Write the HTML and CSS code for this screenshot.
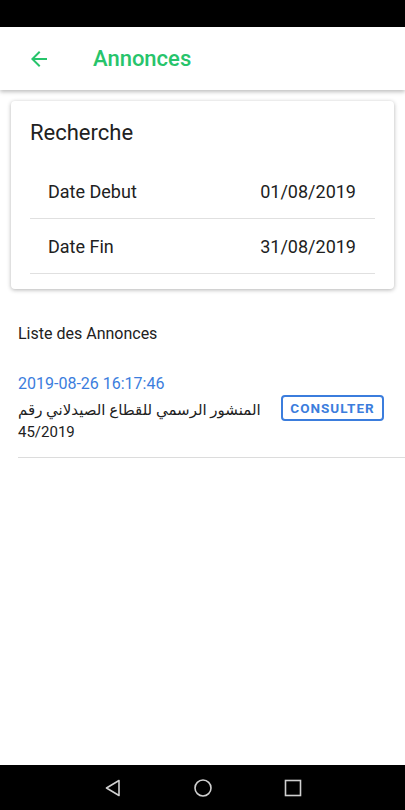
FILE: index.html
```html
<!DOCTYPE html>
<html lang="fr">
<head>
    <meta charset="UTF-8">
    <meta name="viewport" content="width=device-width, initial-scale=1.0">
    <title>Annonces</title>
    <link rel="stylesheet" href="styles.css">
</head>
<body>
    <!--Phone status bar-->
    <div class="statusbar"></div>

    <!--Top app bar-->
    <div class="appbar">
        <a class="back" href="#">
            <svg width="24" height="24" viewBox="0 0 24 24"><path d="M20 11H7.83l5.59-5.59L12 4l-8 8 8 8 1.41-1.41L7.83 13H20v-2z" fill="#27c46b"/></svg>
        </a>
        <div class="title">Annonces</div>
    </div>

    <div class="content">
        <!--Search card-->
        <div class="card">
            <div class="card-title">Recherche</div>
            <div class="field">
                <span>Date Debut</span>
                <span>01/08/2019</span>
            </div>
            <div class="field">
                <span>Date Fin</span>
                <span>31/08/2019</span>
            </div>
        </div>

        <div class="list-title">Liste des Annonces</div>

        <div class="annonce">
            <div class="annonce-text">
                <div class="annonce-date">2019-08-26 16:17:46</div>
                <div class="annonce-name">المنشور الرسمي للقطاع الصيدلاني رقم 45/2019</div>
            </div>
            <button class="btn-outline">CONSULTER</button>
        </div>
    </div>

    <!--Phone navigation bar-->
    <div class="navbar">
        <svg width="20" height="20" viewBox="0 0 20 20"><path d="M16 2.5 L3.5 10 L16 17.5 Z" fill="none" stroke="#d0d0d0" stroke-width="1.6" stroke-linejoin="round"/></svg>
        <svg width="20" height="20" viewBox="0 0 20 20"><circle cx="10" cy="10" r="8" fill="none" stroke="#d0d0d0" stroke-width="1.6"/></svg>
        <svg width="20" height="20" viewBox="0 0 20 20"><rect x="2.5" y="2.5" width="15" height="15" fill="none" stroke="#d0d0d0" stroke-width="1.6"/></svg>
    </div>
</body>
</html>
```

FILE: styles.css
```css
body {
    margin: 0;
    height: 810px;
    display: flex;
    flex-direction: column;
    font-family: Roboto, "DejaVu Sans", sans-serif;
    color: #212121;
    background-color: white;
}
.statusbar {
    height: 27px;
    background-color: black;
}
/*Top bar with back arrow*/
.appbar {
    height: 63px;
    display: flex;
    align-items: center;
    background-color: white;
    box-shadow: 0 2px 4px rgba(0, 0, 0, 0.25);
    position: relative;
    z-index: 1;
}
.back {
    display: flex;
    margin-left: 27px;
    margin-right: 42px;
}
.title {
    color: #27c46b;
    font-size: 22px;
    font-weight: 500;
}
.content {
    flex: 1;
    padding-top: 11px;
}
/*Search card*/
.card {
    margin: 0 11px;
    padding: 18px 19px 15px 19px;
    border-radius: 4px;
    background-color: white;
    box-shadow: 0 1px 4px rgba(0, 0, 0, 0.3);
}
.card-title {
    font-size: 22px;
    line-height: 28px;
    margin-bottom: 17px;
}
.field {
    display: flex;
    justify-content: space-between;
    align-items: center;
    height: 54px;
    padding: 0 19px 0 18px;
    border-bottom: 1px solid #e0e0e0;
    font-size: 18px;
}
.list-title {
    font-size: 16px;
    padding: 35px 18px 0 18px;
    line-height: 20px;
}
/*Announcement row*/
.annonce {
    display: flex;
    align-items: center;
    margin: 29px 0 0 18px;
    padding: 0 21px 14px 0;
    border-bottom: 1px solid #dcdcdc;
}
.annonce-text {
    width: 245px;
    margin-right: auto;
}
.annonce-date {
    color: #3b7ddd;
    font-size: 16px;
    line-height: 22px;
    margin-bottom: 4px;
}
.annonce-name {
    font-size: 15px;
    line-height: 22px;
}
.btn-outline {
    font-family: Roboto, sans-serif;
    font-weight: bold;
    font-size: 13.5px;
    letter-spacing: 1px;
    color: #3b7ddd;
    background-color: white;
    border: 2px solid #3b7ddd;
    border-radius: 4px;
    width: 103px;
    height: 26px;
    padding: 0;
}
.navbar {
    height: 45px;
    background-color: black;
    display: flex;
    justify-content: center;
    align-items: center;
    gap: 70px;
}
```
